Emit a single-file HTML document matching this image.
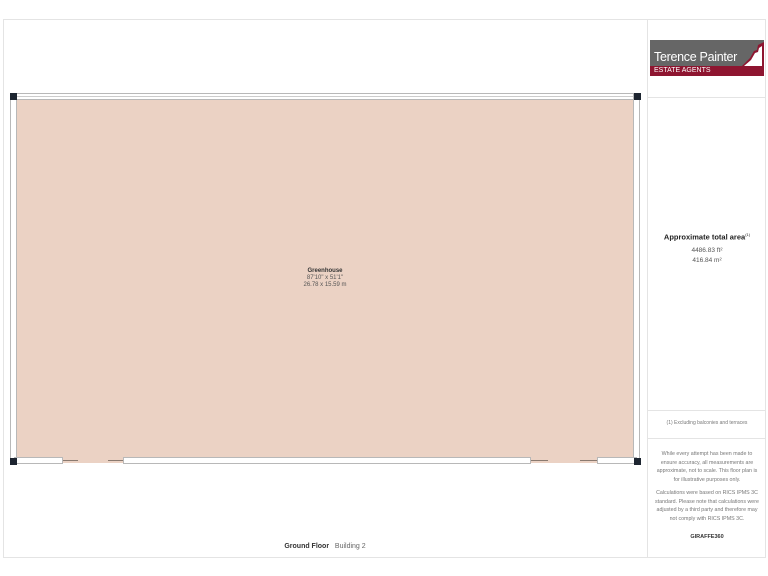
<!DOCTYPE html><html><head><style>
*{margin:0;padding:0;box-sizing:border-box}
body{width:768px;height:576px;background:#fff;position:relative;font-family:"Liberation Sans",sans-serif;overflow:hidden}
.a{position:absolute}
.w{position:absolute;background:#fff;border:1px solid #b8b8b8}
.c{position:absolute;width:7px;height:7px;background:#1d2530}
.t{position:absolute;text-align:center;color:#555}
</style></head><body>
<div class="a" style="left:3px;top:19px;width:763px;height:539px;border:1px solid #e4e4e4"></div>
<div class="a" style="left:647px;top:19px;width:1px;height:539px;background:#e4e4e4"></div>
<div class="a" style="left:648px;top:97px;width:118px;height:1px;background:#e4e4e4"></div>
<div class="a" style="left:648px;top:410px;width:118px;height:1px;background:#e4e4e4"></div>
<div class="a" style="left:648px;top:438px;width:118px;height:1px;background:#e4e4e4"></div>
<!-- logo -->
<div class="a" style="left:650px;top:40px;width:114px;height:26px;background:#666"></div>
<div class="a" style="left:654px;top:50px;color:#fff;font-size:12.5px;letter-spacing:-0.3px">Terence Painter</div>
<div class="a" style="left:650px;top:66px;width:114px;height:10px;background:#8e1530"></div>
<div class="a" style="left:654px;top:67px;color:#fff;font-size:7px">ESTATE AGENTS</div>
<svg class="a" style="left:740px;top:42px" width="24" height="34"><path d="M2 24 L10 16 L14 9 L17 8 L18 3 L22 1 L24 0 L24 34 L2 34Z" fill="#8e1530"/><path d="M4 24 L11 18 L15 11 L18 10 L19 6 L22 4 L22 24Z" fill="#fff"/></svg>
<!-- plan -->
<div class="a" style="left:16px;top:100px;width:618px;height:363px;background:#ebd2c4"></div>
<div class="w" style="left:10px;top:93px;width:630px;height:7px"></div>
<div class="a" style="left:10px;top:96px;width:630px;height:1px;background:#ccc"></div>
<div class="w" style="left:10px;top:93px;width:7px;height:371px"></div>
<div class="w" style="left:633px;top:93px;width:7px;height:371px"></div>
<div class="w" style="left:14px;top:457px;width:49px;height:7px"></div>
<div class="w" style="left:123px;top:457px;width:408px;height:7px"></div>
<div class="w" style="left:597px;top:457px;width:40px;height:7px"></div>
<div class="a" style="left:63px;top:460px;width:15px;height:1px;background:#8a7a70"></div>
<div class="a" style="left:108px;top:460px;width:15px;height:1px;background:#8a7a70"></div>
<div class="a" style="left:531px;top:460px;width:17px;height:1px;background:#8a7a70"></div>
<div class="a" style="left:580px;top:460px;width:17px;height:1px;background:#8a7a70"></div>
<div class="c" style="left:10px;top:93px"></div>
<div class="c" style="left:634px;top:93px"></div>
<div class="c" style="left:10px;top:458px"></div>
<div class="c" style="left:634px;top:458px"></div>
<div class="t" style="left:275px;top:268px;width:100px;font-size:6px;line-height:7px"><b style="color:#333">Greenhouse</b><br>87'10" x 51'1"<br>26.78 x 15.59 m</div>
<div class="t" style="left:260px;top:543px;width:130px;font-size:7px;color:#333"><b>Ground Floor</b>&nbsp;&nbsp; <span style="color:#666">Building 2</span></div>
<!-- panel text -->
<div class="t" style="left:648px;top:232px;width:118px;font-size:7.5px;color:#222"><b>Approximate total area</b><sup style="font-size:4px">(1)</sup></div>
<div class="t" style="left:648px;top:246px;width:118px;font-size:6.5px;line-height:10px">4486.83 ft²<br>416.84 m²</div>
<div class="t" style="left:648px;top:420px;width:118px;font-size:5px;color:#777">(1) Excluding balconies and terraces</div>
<div class="t" style="left:654px;top:450px;width:106px;font-size:5.3px;line-height:8.5px;color:#777">While every attempt has been made to ensure accuracy, all measurements are approximate, not to scale. This floor plan is for illustrative purposes only.<br><div style="height:5px"></div>Calculations were based on RICS IPMS 3C standard. Please note that calculations were adjusted by a third party and therefore may not comply with RICS IPMS 3C.</div>
<div class="t" style="left:648px;top:534px;width:118px;font-size:5.5px;color:#333;font-weight:bold">GIRAFFE360</div>
</body></html>
